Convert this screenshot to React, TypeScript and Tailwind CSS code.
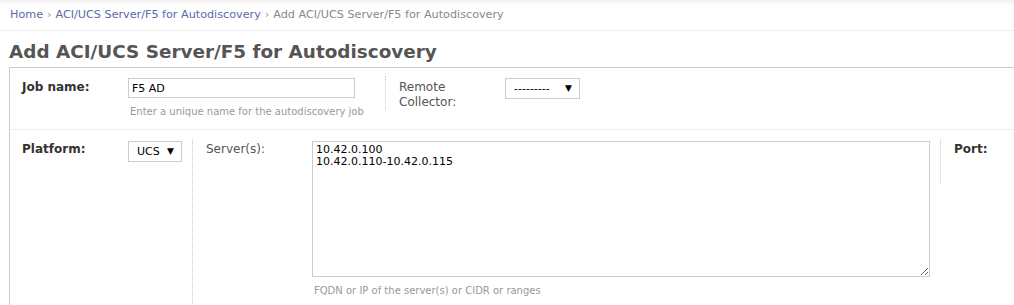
import React from "react";

// small fake select box (native select can't be styled closely enough)
function FakeSelect({ value, width }: { value: string; width: string }) {
  return (
    <div
      className={`${width} h-[21px] border border-[#ccc] bg-white flex items-center justify-between pl-[8px] pr-[7px] text-[11px] text-black`}
    >
      <span className="pt-[2px]">{value}</span>
      <span className="text-[9px] leading-none">▼</span>
    </div>
  );
}

export default function App() {
  return (
    <div className="w-[1014px] h-[305px] overflow-hidden bg-white font-['DejaVu_Sans',sans-serif]">
      {/* breadcrumb */}
      <div className="h-[31px] border-b border-[#eee] shadow-[inset_0_5px_5px_-3px_rgba(0,0,0,0.08)] flex items-center pl-[10px] text-[11.2px] text-[#888]">
        <span className="text-[#5b6aa6]">Home</span>
        <span className="mx-[4px] text-[#999]">›</span>
        <span className="text-[#5b6aa6]">ACI/UCS Server/F5 for Autodiscovery</span>
        <span className="mx-[4px] text-[#999]">›</span>
        <span>Add ACI/UCS Server/F5 for Autodiscovery</span>
      </div>

      {/* title */}
      <h1 className="ml-[9px] mt-[10px] h-[26px] text-[18.4px] leading-[22px] font-bold text-[#555]">
        Add ACI/UCS Server/F5 for Autodiscovery
      </h1>

      {/* form box */}
      <div className="ml-[9px] w-[1040px] border-t border-l border-[#ccc]">
        {/* row 1 */}
        <div className="h-[62px] border-b border-[#eee] pt-[8px] flex">
          <div className="w-[375px] pl-[12px] pr-[10px] flex">
            <div className="w-[106px] pt-[4px] text-[12px] leading-[15px] font-bold text-[#333]">
              Job name:
            </div>
            <div className="flex flex-col">
              <input
                defaultValue="F5 AD"
                className="w-[227px] h-[20px] mt-[2px] border border-[#ccc] px-[3px] text-[11px] text-black outline-none"
              />
              <div className="mt-[6px] pl-[2px] text-[10px] text-[#999]">
                Enter a unique name for the autodiscovery job
              </div>
            </div>
          </div>
          <div className="h-[34px] border-l border-dotted border-[#ccc] pl-[13px] flex">
            <div className="w-[106px] pt-[4px] text-[12px] leading-[15px] text-[#555]">
              Remote
              <br />
              Collector:
            </div>
            <div className="mt-[2px]">
              <FakeSelect value="---------" width="w-[75px]" />
            </div>
          </div>
        </div>

        {/* row 2 */}
        <div className="h-[180px] pt-[9px] flex">
          <div className="w-[182px] pl-[12px] pr-[10px] flex">
            <div className="w-[106px] pt-[3px] text-[12px] leading-[15px] font-bold text-[#333]">
              Platform:
            </div>
            <div className="mt-[2px]">
              <FakeSelect value="UCS" width="w-[54px]" />
            </div>
          </div>
          <div className="w-[748px] border-l border-dotted border-[#ccc] pl-[13px] pr-[10px] flex">
            <div className="w-[106px] pt-[3px] text-[12px] leading-[15px] text-[#555]">
              Server(s):
            </div>
            <div className="flex flex-col">
              <textarea
                defaultValue={"10.42.0.100\n10.42.0.110-10.42.0.115"}
                className="w-[618px] h-[136px] mt-[2px] border border-[#ccc] px-[3px] pt-[2px] text-[11px] leading-[12px] text-black outline-none resize"
              />
              <div className="mt-[6px] pl-[2px] text-[10px] text-[#999]">
                FQDN or IP of the server(s) or CIDR or ranges
              </div>
            </div>
          </div>
          <div className="h-[45px] border-l border-dotted border-[#ccc] pl-[13px]">
            <div className="pt-[3px] text-[12px] leading-[15px] font-bold text-[#333]">
              Port:
            </div>
          </div>
        </div>
      </div>
    </div>
  );
}
